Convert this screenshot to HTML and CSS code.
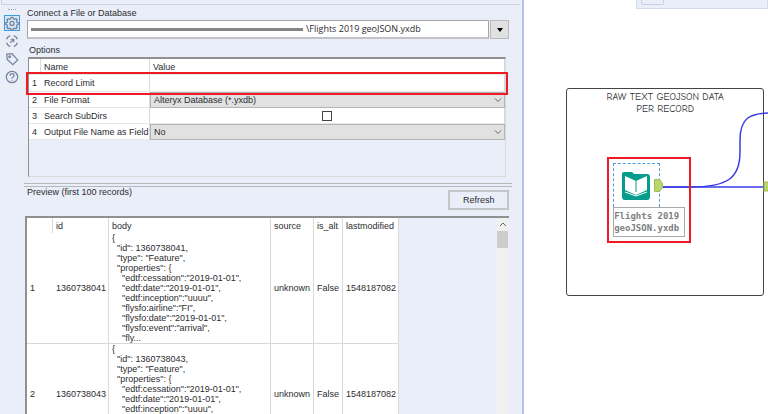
FILE: index.html
```html
<!DOCTYPE html>
<html lang="en">
  <head>
    <meta charset="UTF-8" />
    <meta name="viewport" content="width=device-width, initial-scale=1" />
    <title>Input Data - Configuration</title>
    <link rel="stylesheet" href="styles.css">
  </head>
  <body>
    <main class="app">
      <section class="panel" aria-label="Configuration">
        <div class="panel-top"></div>
        <div class="panel-body">
          <nav class="side" aria-label="Configuration tabs">
            <span class="grip" aria-hidden="true"></span>
            <button class="side-btn active" type="button" aria-label="Configuration">
              <svg viewBox="0 0 16 16">
                <path d="M6.9 1.5h2.2l.5 1.8 1.2.5 1.7-.9 1.5 1.5-.9 1.7.5 1.2 1.6.4v2.2l-1.7.5-.5 1.2.9 1.6-1.5 1.5-1.7-.9-1.1.5-.5 1.7H6.9l-.5-1.7-1.2-.5-1.6.9-1.5-1.5.9-1.6-.5-1.2-1.7-.5V7.7l1.7-.4.5-1.2-.9-1.7 1.500-1.500 1.700.9 1.200-.5z" />
                <circle cx="8" cy="8.500" r="2.300" />
              </svg>
            </button>
            <button class="side-btn" type="button" aria-label="Navigation">
              <svg viewBox="0 0 16 16">
                <path d="M6 1.800A6.500 6.500 0 0 0 1.800 6M1.800 10A6.500 6.500 0 0 0 6 14.200M10 14.200A6.500 6.500 0 0 0 14.200 10M14.200 6A6.500 6.500 0 0 0 10 1.800" />
                <path d="M6 10l3.800-3.800M6.500 6H10v3.500" />
              </svg>
            </button>
            <button class="side-btn" type="button" aria-label="Annotation">
              <svg viewBox="0 0 16 16">
                <path d="M2 2.500l6-.5 6.500 7-5.500 5.500-6.500-6z" />
                <circle cx="5.300" cy="5.500" r="1" />
              </svg>
            </button>
            <button class="side-btn" type="button" aria-label="Help">
              <svg viewBox="0 0 16 16">
                <circle cx="8" cy="8" r="6.500" />
                <path d="M5.800 6.500c0-3 4.500-3 4.500-.3C10.300 8 8 7.800 8 9.700M8 11v1.300" />
              </svg>
            </button>
          </nav>

          <div class="content">
            <label class="caption" for="path">Connect a File or Database</label>
            <div class="path-row">
              <div class="path-box">
                <span class="redacted"></span>
                <input id="path" type="text" value="\Flights 2019 geoJSON.yxdb" />
              </div>
              <button class="drop-btn" type="button" aria-label="Choose connection">
                <svg viewBox="0 0 6 4"><path d="M0 0h6L3 4z" /></svg>
              </button>
            </div>

            <h2 class="caption options-caption">Options</h2>
            <div class="options">
              <table class="options-table">
                <thead>
                  <tr><th class="num"></th><th class="name">Name</th><th>Value</th></tr>
                </thead>
                <tbody>
                  <tr class="marked">
                    <td>1</td>
                    <td><label for="limit">Record Limit</label></td>
                    <td><input class="limit" id="limit" type="text" /></td>
                  </tr>
                  <tr>
                    <td>2</td>
                    <td><label for="format">File Format</label></td>
                    <td class="pick">
                      <div class="select">
                        <select id="format"><option>Alteryx Database (*.yxdb)</option></select>
                        <svg viewBox="0 0 8 5"><path d="M1 .5l3 3 3-3" /></svg>
                      </div>
                    </td>
                  </tr>
                  <tr>
                    <td>3</td>
                    <td><label for="subdirs">Search SubDirs</label></td>
                    <td class="check"><input id="subdirs" type="checkbox" /></td>
                  </tr>
                  <tr>
                    <td>4</td>
                    <td><label for="field">Output File Name as Field</label></td>
                    <td class="pick">
                      <div class="select">
                        <select id="field"><option>No</option></select>
                        <svg viewBox="0 0 8 5"><path d="M1 .5l3 3 3-3" /></svg>
                      </div>
                    </td>
                  </tr>
                </tbody>
              </table>
            </div>

            <div class="splitter"></div>

            <div class="preview-head">
              <h2 class="caption">Preview (first 100 records)</h2>
              <button class="refresh" type="button">Refresh</button>
            </div>
            <div class="preview">
              <table class="records">
                <thead>
                  <tr>
                    <th class="c-num"></th>
                    <th class="c-id">id</th>
                    <th class="c-body">body</th>
                    <th class="c-source">source</th>
                    <th class="c-alt">is_alt</th>
                    <th class="c-mod">lastmodified</th>
                  </tr>
                </thead>
                <tbody>
                  <tr>
                    <td>1</td>
                    <td>1360738041</td>
                    <td class="json">{
  "id": 1360738041,
  "type": "Feature",
  "properties": {
    "edtf:cessation":"2019-01-01",
    "edtf:date":"2019-01-01",
    "edtf:inception":"uuuu",
    "flysfo:airline":"FI",
    "flysfo:date":"2019-01-01",
    "flysfo:event":"arrival",
    "fly...</td>
                    <td>unknown</td>
                    <td>False</td>
                    <td>1548187082</td>
                  </tr>
                  <tr>
                    <td>2</td>
                    <td>1360738043</td>
                    <td class="json">{
  "id": 1360738043,
  "type": "Feature",
  "properties": {
    "edtf:cessation":"2019-01-01",
    "edtf:date":"2019-01-01",
    "edtf:inception":"uuuu",
    "flysfo:airline":"FI",
    "flysfo:date":"2019-01-01",
    "fly...</td>
                    <td>unknown</td>
                    <td>False</td>
                    <td>1548187082</td>
                  </tr>
                </tbody>
              </table>
              <div class="scrollbar" aria-hidden="true">
                <svg viewBox="0 0 8 5"><path d="M1 4l3-3 3 3" /></svg>
                <span class="thumb"></span>
              </div>
            </div>
          </div>
        </div>
      </section>

      <section class="canvas" aria-label="Workflow canvas">
        <div class="overview"><span class="overview-tab"></span></div>

        <div class="container-box">RAW TEXT GEOJSON DATA<br />PER RECORD</div>

        <!-- connections leaving the input tool -->
        <svg class="wires" width="244" height="414" viewBox="0 0 244 414">
          <path d="M138 187h104" />
          <path d="M138 187h28C204 187 216 178 216 152V140C216 118 226 113 246 113" />
          <rect x="240" y="182" width="6" height="9" />
        </svg>

        <div class="node">
          <div class="tool">
            <svg class="book" viewBox="0 0 28 28">
              <path class="cover" d="M2 0h8l2 2h13q3 0 3 3v20q0 3-3 3H3q-3 0-3-3V2q0-2 2-2z" />
              <path class="pages" d="M3 4l11 5v14L3 18zM25 4l-11 5v14l11-5z" />
              <path class="gutter" d="M14 9v11" />
              <path class="fold" d="M3 20l11 4 11-4" />
            </svg>
            <svg class="anchor" viewBox="0 0 9 13"><path d="M.5.5h5l3 4v4l-3 4h-5z" /></svg>
          </div>
          <div class="annotation">Flights 2019 geoJSON.yxdb</div>
        </div>
      </section>
    </main>
  </body>
</html>
```
FILE: styles.css
```css
:root {
  --panel: #e9eef9;
  --line: #d9d9d9;
  --dark-line: #8f9190;
  --red: #ed1c24;
  --text: #2c2c30;
  --icon: #74829a;
  --wire: #3b3be6;
}
* {
  box-sizing: border-box;
}
body {
  margin: 0;
  font-family: "Liberation Sans", Arial, sans-serif;
  font-size: 9px;
  line-height: 10px;
  color: var(--text);
  background: #fff;
}
button,
input,
select {
  font: inherit;
  color: inherit;
  margin: 0;
  padding: 0;
}
.app {
  display: flex;
  height: 100vh;
  overflow: hidden;
}

/* Configuration panel */
.panel {
  flex: 0 0 68.25%;
  display: flex;
  flex-direction: column;
  background: var(--panel);
  border-right: 2px solid #b2c4e8;
}
.panel-top {
  height: 5px;
  border-bottom: 1px solid #cfd2d8;
  border-left: 1px solid #cfd2d8;
  margin: 0 2px 0 1px;
}
.panel-body {
  flex: 1;
  display: flex;
  min-height: 0;
}
.side {
  flex: 0 0 24px;
  display: flex;
  flex-direction: column;
  align-items: center;
  gap: 2px;
  padding-top: 4px;
}
.grip {
  width: 8px;
  height: 4px;
  border-top: 1px dotted #9aa3b3;
}
.side-btn {
  width: 16px;
  height: 16px;
  border: 1px solid transparent;
  background: none;
  display: flex;
}
.side-btn.active {
  border-color: #3f9be0;
  background: #d6e8fa;
}
.side-btn svg {
  width: 14px;
  height: 14px;
  fill: none;
  stroke: var(--icon);
  stroke-width: 1.4;
}
.content {
  flex: 1;
  min-width: 0;
  display: flex;
  flex-direction: column;
  padding: 3px 13px 0 3px;
}
.caption {
  margin: 0;
  font-size: 9px;
  font-weight: 400;
  line-height: 10px;
}

/* File path */
.path-row {
  display: flex;
  gap: 1px;
  margin-top: 2px;
}
.path-box {
  flex: 1;
  display: flex;
  align-items: center;
  gap: 3px;
  height: 19px;
  padding-left: 3px;
  background: #fff;
  border: 1px solid #a3a5a8;
  border-bottom: 2px solid #c2c3c6;
}
.redacted {
  flex: 0 0 59.5%;
  height: 3px;
  background: #858585;
}
.path-box input {
  flex: 1;
  min-width: 0;
  border: 0;
  background: none;
  font-family: "Open Sans", "Segoe UI", sans-serif;
}
.drop-btn {
  width: 19px;
  height: 19px;
  background: #e1e1e1;
  border: 1px solid #b9babc;
}
.drop-btn svg {
  display: block;
  width: 6px;
  height: 4px;
  margin: 0 auto;
}

/* Options grid */
.options-caption {
  margin: 6px 0 0 2px;
}
.options {
  height: 120px;
  margin: 2px 3px 0 1px;
  border: 1px solid var(--line);
  border-top: 2px solid var(--dark-line);
  border-left: 1px solid var(--dark-line);
}
.options-table {
  width: 100%;
  table-layout: fixed;
  border-collapse: separate;
  border-spacing: 0;
  background: #fff;
}
.options-table th,
.options-table td {
  height: 16px;
  padding: 0 3px;
  border-right: 1px solid var(--line);
  border-bottom: 1px solid #e8e8e8;
  font-weight: 400;
  text-align: left;
  white-space: nowrap;
}
.options-table .num {
  width: 12px;
}
.options-table .name {
  width: 109px;
}
.options-table td:first-child {
  border-right: 0;
}
.options-table .marked td {
  height: 17px;
}
.marked {
  outline: 2px solid var(--red);
  outline-offset: 1px;
}
.limit {
  display: block;
  width: 100%;
  height: 10px;
  border: 0;
  background: none;
}
.options-table .pick {
  padding: 0;
  border: 0;
}
.options-table .check {
  text-align: center;
}
.select {
  display: grid;
  align-items: center;
}
.select select,
.select svg {
  grid-area: 1 / 1;
}
.select select {
  appearance: none;
  width: 100%;
  height: 16px;
  padding: 0 3px;
  border: 1px solid #b4b4b4;
  border-radius: 0;
  background: #e1e1e1;
}
.select svg {
  justify-self: end;
  width: 8px;
  height: 5px;
  margin-right: 3px;
  pointer-events: none;
}
.select path,
.scrollbar path {
  fill: none;
  stroke: #666;
}
.check input {
  appearance: none;
  display: inline-block;
  width: 10px;
  height: 10px;
  vertical-align: middle;
  border: 1px solid #444;
  background: #fff;
}
.splitter {
  height: 4px;
  margin: 6px -3px 0;
  border-top: 1px solid #b5b7bb;
  border-bottom: 1px solid #b5b7bb;
}

/* Preview */
.preview-head {
  display: flex;
  justify-content: space-between;
  align-items: flex-start;
  margin-bottom: 6px;
}
.refresh {
  width: 61px;
  height: 20px;
  margin-top: 3px;
  border: 2px solid #c3c5c9;
  background: var(--panel);
}
.preview {
  flex: 1;
  min-height: 0;
  display: flex;
  justify-content: space-between;
  overflow: hidden;
  margin-left: -2px;
  border-top: 2px solid var(--dark-line);
  border-left: 2px solid var(--dark-line);
}
.records {
  align-self: flex-start;
  table-layout: fixed;
  width: 372px;
  border-collapse: separate;
  border-spacing: 0;
  background: #fff;
}
.records th,
.records td {
  padding: 0 3px;
  border-right: 1px solid var(--line);
  font-weight: 400;
  text-align: left;
  white-space: nowrap;
}
.records th {
  height: 15px;
}
.records td {
  border-bottom: 1px solid var(--line);
}
.records td:first-child {
  border-right: 0;
}
.records .c-num {
  width: 26px;
}
.records .c-id {
  width: 56px;
}
.records .c-body {
  width: 162px;
}
.records .c-source {
  width: 43px;
}
.records .c-alt {
  width: 29px;
}
.records .json {
  white-space: pre;
}
.scrollbar {
  width: 13px;
  background: #f0f0f0;
  display: flex;
  flex-direction: column;
  align-items: center;
  gap: 4px;
  padding-top: 4px;
}
.scrollbar svg {
  width: 8px;
  height: 5px;
}
.thumb {
  width: 11px;
  height: 17px;
  background: #cdcdcd;
}

/* Workflow canvas */
.canvas {
  flex: 1;
  position: relative;
  overflow: hidden;
}
.overview {
  height: 9px;
  margin-left: 112px;
  padding-left: 4px;
  background: #e9eef9;
  border: 1px solid #d3dcee;
  border-top: 0;
}
.overview-tab {
  display: block;
  width: 23px;
  height: 5px;
  border: 1px solid #c5d0e8;
  border-top: 0;
  border-radius: 0 0 2px 2px;
}
.container-box {
  position: absolute;
  left: 42px;
  top: 88px;
  width: 198px;
  height: 208px;
  padding-top: 2px;
  border: 1px solid #444;
  border-radius: 3px;
  font-family: "Comic Sans MS", "Comic Neue", "Noto Sans", sans-serif;
  font-size: 10px;
  line-height: 12px;
  text-align: center;
}
.wires {
  position: absolute;
  left: 0;
  top: 0;
}
.wires path {
  fill: none;
  stroke: var(--wire);
  stroke-width: 1.5;
}
.wires rect,
.anchor path {
  fill: #b9d869;
  stroke: #9cba57;
}
.node {
  position: absolute;
  left: 83px;
  top: 157px;
  padding: 4px;
  border: 2px solid var(--red);
}
.tool {
  display: flex;
  align-items: center;
  width: 47px;
  height: 44px;
  padding-left: 8px;
  border: 1px dashed #4a9be0;
  border-bottom: 0;
}
.book {
  flex: none;
  width: 28px;
  height: 28px;
}
.cover {
  fill: #089c8c;
}
.pages {
  fill: #fff;
}
.fold {
  fill: none;
  stroke: #fff;
}
.gutter {
  fill: none;
  stroke: #089c8c;
}
.anchor {
  flex: none;
  width: 9px;
  height: 13px;
  margin-left: 4px;
}
.annotation {
  width: 72px;
  padding: 2px 0 2px;
  border: 1px solid #a9a9a9;
  color: #808080;
  font-family: "DejaVu Sans Mono", monospace;
  font-weight: 700;
  line-height: 12px;
}
```
